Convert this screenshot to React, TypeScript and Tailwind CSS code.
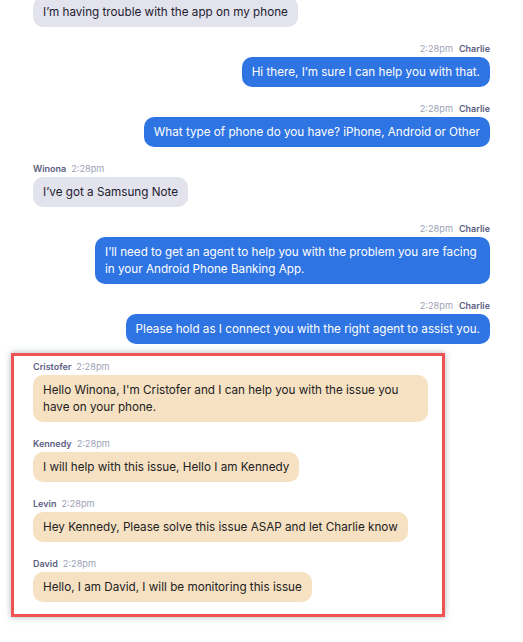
import React from "react";

type Msg = { side: "left" | "right"; name?: string; text: string; kind: "gray" | "blue" | "tan" };

function Header({ side, name }: { side: "left" | "right"; name?: string }) {
  if (!name) return null;
  return side === "left" ? (
    <div className="flex items-center gap-[5px] text-[9px] leading-4">
      <span className="font-semibold text-[#5b5e82]">{name}</span>
      <span className="text-[#9c9fb6] text-[9.2px]">2:28pm</span>
    </div>
  ) : (
    <div className="flex items-center justify-end gap-[6px] text-[9px] leading-4">
      <span className="text-[#9c9fb6] text-[9.2px]">2:28pm</span>
      <span className="font-semibold text-[#5b5e82]">{name}</span>
    </div>
  );
}

function Bubble({ m }: { m: Msg }) {
  const color =
    m.kind === "blue"
      ? "bg-[#2f74e3] text-white"
      : m.kind === "gray"
      ? "bg-[#e2e3ed] text-[#1f2030]"
      : "bg-[#f6e1c2] text-[#222222]";
  return (
    <div className={`flex flex-col ${m.side === "right" ? "items-end" : "items-start"}`}>
      <Header side={m.side} name={m.name} />
      <div className={`${color} max-w-[395px] rounded-[10px] px-[10px] py-[6.5px] text-[11.7px] leading-[17px]`}>
        {m.text}
      </div>
    </div>
  );
}

const top: Msg[] = [
  { side: "left", text: "I’m having trouble with the app on my phone", kind: "gray" },
  { side: "right", name: "Charlie", text: "Hi there, I’m sure I can help you with that.", kind: "blue" },
  { side: "right", name: "Charlie", text: "What type of phone do you have? iPhone, Android or Other", kind: "blue" },
  { side: "left", name: "Winona", text: "I’ve got a Samsung Note", kind: "gray" },
  {
    side: "right",
    name: "Charlie",
    text: "I’ll need to get an agent to help you with the problem you are facing in your Android Phone Banking App.",
    kind: "blue",
  },
  { side: "right", name: "Charlie", text: "Please hold as I connect you with the right agent to assist you.", kind: "blue" },
];

const agents: Msg[] = [
  {
    side: "left",
    name: "Cristofer",
    text: "Hello Winona, I'm Cristofer and I can help you with the issue you have on your phone.",
    kind: "tan",
  },
  { side: "left", name: "Kennedy", text: "I will help with this issue, Hello I am Kennedy", kind: "tan" },
  { side: "left", name: "Levin", text: "Hey Kennedy, Please solve this issue ASAP and let Charlie know", kind: "tan" },
  { side: "left", name: "David", text: "Hello, I am David, I will be monitoring this issue", kind: "tan" },
];

export default function App() {
  return (
    <div
      className="w-[523px] h-[642px] overflow-hidden bg-white"
      style={{ fontFamily: "Inter, 'Noto Sans', sans-serif" }}
    >
      <div className="-mt-[3px] px-[33px] flex flex-col gap-[14px]">
        {top.map((m, i) => (
          <Bubble key={i} m={m} />
        ))}
      </div>
      <div className="mt-[9px] ml-[11px] w-[434px] border-[3px] border-[#f05353] shadow-[0_0_6px_rgba(90,110,120,0.5)] pl-[19px] pr-[14px] pt-[3px] pb-[12px] flex flex-col gap-[14px]">
        {agents.map((m, i) => (
          <Bubble key={i} m={m} />
        ))}
      </div>
    </div>
  );
}
